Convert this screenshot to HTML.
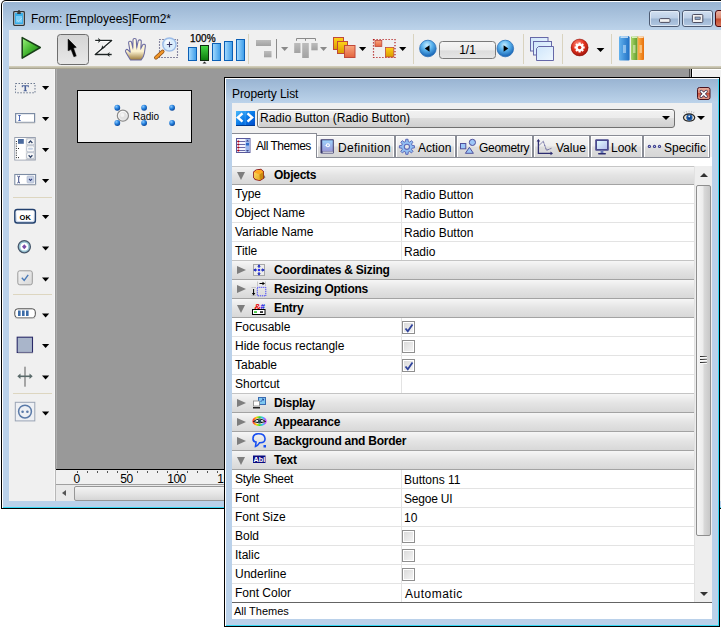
<!DOCTYPE html><html><head><meta charset="utf-8"><style>

*{box-sizing:border-box}
body{margin:0;width:721px;height:627px;background:#fff;position:relative;overflow:hidden;font-family:"Liberation Sans",sans-serif;font-size:12px;color:#000}
.abs{position:absolute}
.t{position:absolute;white-space:pre;line-height:1}
.arr{position:absolute;width:0;height:0;border-left:4px solid transparent;border-right:4px solid transparent;border-top:4px solid #000}
.row{position:absolute;left:232px;width:462px;height:19px;background:#fff;border-bottom:1px solid #e3e3e3}
.hdr{position:absolute;left:232px;width:462px;height:19px;background:linear-gradient(#f6f6f6,#e4e4e4 50%,#d8d8d8);border-bottom:1px solid #a3a3a3}
.nm{position:absolute;left:3px;top:3px;white-space:pre;line-height:13px}
.vl{position:absolute;left:172px;top:4px;white-space:pre;line-height:13px}
.ht{position:absolute;left:42px;top:3px;white-space:pre;line-height:13px;font-weight:bold;letter-spacing:-0.25px}
.tri-r{position:absolute;left:5px;top:5px;width:0;height:0;border-top:4.5px solid transparent;border-bottom:4.5px solid transparent;border-left:9px solid #7e7e7e}
.tri-d{position:absolute;left:5px;top:6px;width:0;height:0;border-left:4.7px solid transparent;border-right:4.7px solid transparent;border-top:8.7px solid #7e7e7e}
.cb{position:absolute;left:170px;top:3px;width:13px;height:13px;border:1px solid #8f8f8f;background:linear-gradient(135deg,#d8d8d8,#f6f6f6);box-shadow:inset 0 0 0 1px #fff}
.tab{position:absolute;top:135px;height:23px;border:1px solid #898c95;border-bottom:1px solid #898c95;background:linear-gradient(#f6f6f6,#ededed 48%,#dedede 52%,#d6d6d6);box-shadow:inset 1px 1px 0 #fff, inset -1px 0 0 #fff}
.sep{position:absolute;width:1px;background:#d6d0bd}

</style></head><body>
<div class="abs" style="left:1px;top:0;width:740px;height:509px;background:#000;border-radius:5px 0 0 0"></div>
<div class="abs" style="left:2px;top:1px;width:740px;height:507px;background:#fff;border-radius:4px 0 0 0"></div>
<div class="abs" style="left:3px;top:2px;width:740px;height:506px;background:#bad1ea;border-radius:3px 0 0 0"></div>
<div class="abs" style="left:3px;top:2px;width:740px;height:28px;background:linear-gradient(#99b4d2,#bcd3ea);border-radius:3px 0 0 0"></div>
<div class="abs" style="left:3px;top:507px;width:740px;height:1px;background:#34d8f4"></div>
<svg class="abs" style="left:0;top:0" width="721" height="30" viewBox="0 0 721 30">
<defs>
<linearGradient id="wBtn" x1="0" y1="0" x2="0" y2="1"><stop offset="0" stop-color="#d3e1f1"/><stop offset="0.48" stop-color="#bccfe6"/><stop offset="0.52" stop-color="#9db6d3"/><stop offset="1" stop-color="#b2c8e2"/></linearGradient>
<linearGradient id="wClose" x1="0" y1="0" x2="0" y2="1"><stop offset="0" stop-color="#ebb0a2"/><stop offset="0.48" stop-color="#d98870"/><stop offset="0.52" stop-color="#c24a2c"/><stop offset="1" stop-color="#d8775e"/></linearGradient>
</defs>
<rect x="13.7" y="11.6" width="10.6" height="13.7" rx="0.8" fill="#cde6f8" stroke="#333" stroke-width="1.3"/>
<rect x="15" y="13" width="8" height="11" fill="#3aaee8"/>
<rect x="16" y="16" width="6" height="6.5" fill="#7ccdf6"/>
<path d="M17 20 L18.7 21.5 L21.5 18.3" fill="none" stroke="#d8f0ff" stroke-width="0.9" stroke-dasharray="0.8 0.6"/>
<rect x="17.2" y="12.3" width="3.6" height="1.6" fill="#333"/><rect x="18.3" y="10" width="1.4" height="3" fill="#333"/>
<rect x="649.5" y="10.5" width="30" height="16" rx="2.5" fill="url(#wBtn)" stroke="#4d5b72"/>
<rect x="650.5" y="11.5" width="28" height="14" rx="1.5" fill="none" stroke="#e6eef8" stroke-opacity="0.8"/>
<rect x="659.5" y="18.6" width="10.5" height="3.8" rx="1" fill="#f2f2f2" stroke="#3c3c50" stroke-width="0.9"/>
<rect x="682.5" y="10.5" width="30" height="16" rx="2.5" fill="url(#wBtn)" stroke="#4d5b72"/>
<rect x="683.5" y="11.5" width="28" height="14" rx="1.5" fill="none" stroke="#e6eef8" stroke-opacity="0.8"/>
<rect x="692.4" y="14.5" width="10.4" height="8" rx="1" fill="#f2f2f2" stroke="#3c3c50" stroke-width="0.9"/>
<rect x="695" y="17" width="5.2" height="2.6" fill="#8fa8c8" stroke="#3c3c50" stroke-width="0.6"/>
<rect x="715.5" y="10.5" width="40" height="16" rx="2.5" fill="url(#wClose)" stroke="#4a0a10"/>
</svg>
<div class="t" style="left:31px;top:13px;font-size:12px">Form: [Employees]Form2*</div>
<div class="abs" style="left:9px;top:30px;width:740px;height:471px;background:#f0f0f0"></div>
<div class="abs" style="left:9px;top:66px;width:740px;height:3px;background:linear-gradient(#d6d2bf,#c2beaa,#9a9684)"></div>
<svg class="abs" style="left:0;top:0" width="721" height="70" viewBox="0 0 721 70">
<defs>
<linearGradient id="gPlay" x1="0" y1="0" x2="1" y2="1"><stop offset="0" stop-color="#9cf57c"/><stop offset="0.5" stop-color="#43b52f"/><stop offset="1" stop-color="#157015"/></linearGradient>
<linearGradient id="gSel" x1="0" y1="0" x2="0" y2="1"><stop offset="0" stop-color="#d5d5d5"/><stop offset="0.5" stop-color="#dedede"/><stop offset="1" stop-color="#e8e8e8"/></linearGradient>
<linearGradient id="gBar" x1="0" y1="0" x2="1" y2="0"><stop offset="0" stop-color="#a7dcff"/><stop offset="1" stop-color="#3a9be8"/></linearGradient>
<linearGradient id="gGreen" x1="0" y1="0" x2="0" y2="1"><stop offset="0" stop-color="#45d845"/><stop offset="1" stop-color="#0b7a0b"/></linearGradient>
<linearGradient id="gGray" x1="0" y1="0" x2="0" y2="1"><stop offset="0" stop-color="#bdbdbd"/><stop offset="1" stop-color="#a2a2a2"/></linearGradient>
<linearGradient id="gYel" x1="0" y1="0" x2="0" y2="1"><stop offset="0" stop-color="#ffd21a"/><stop offset="1" stop-color="#d99a00"/></linearGradient>
<linearGradient id="gSal" x1="0" y1="0" x2="0" y2="1"><stop offset="0" stop-color="#f9a77f"/><stop offset="1" stop-color="#e3633d"/></linearGradient>
<radialGradient id="gBlueC" cx="0.45" cy="0.3" r="0.7"><stop offset="0" stop-color="#c6ecff"/><stop offset="0.45" stop-color="#5ab3ee"/><stop offset="1" stop-color="#145fb0"/></radialGradient>
<linearGradient id="gBox" x1="0" y1="0" x2="0" y2="1"><stop offset="0" stop-color="#f6f6f6"/><stop offset="0.5" stop-color="#ececec"/><stop offset="0.55" stop-color="#dcdcdc"/><stop offset="1" stop-color="#e6e6e6"/></linearGradient>
<linearGradient id="gPage" x1="0" y1="0" x2="1" y2="1"><stop offset="0" stop-color="#cfe6fb"/><stop offset="1" stop-color="#eef7ff"/></linearGradient>
<radialGradient id="gRed" cx="0.4" cy="0.3" r="0.75"><stop offset="0" stop-color="#ff8c7a"/><stop offset="0.5" stop-color="#e2321e"/><stop offset="1" stop-color="#9b120a"/></radialGradient>
<linearGradient id="gBook1" x1="0" y1="0" x2="1" y2="0"><stop offset="0" stop-color="#63b2ee"/><stop offset="1" stop-color="#1f6fc4"/></linearGradient>
<linearGradient id="gBook2" x1="0" y1="0" x2="1" y2="0"><stop offset="0" stop-color="#a9d66a"/><stop offset="1" stop-color="#5f9a2a"/></linearGradient>
<linearGradient id="gBook3" x1="0" y1="0" x2="1" y2="0"><stop offset="0" stop-color="#ffb14a"/><stop offset="1" stop-color="#e7700c"/></linearGradient>
<linearGradient id="gHand" x1="0" y1="0" x2="0" y2="1"><stop offset="0" stop-color="#fffbe8"/><stop offset="0.6" stop-color="#fbf1cf"/><stop offset="1" stop-color="#9c7a3a"/></linearGradient>
</defs>
<path d="M22.2 37.6 L40.3 47.5 L22.2 58.2 Z" fill="url(#gPlay)" stroke="#183f18" stroke-width="1.5" stroke-linejoin="round"/>
<rect x="57.5" y="34.5" width="31" height="30" rx="3" fill="url(#gSel)" stroke="#6e6e6e"/>
<path d="M69 40 L69 51.6 L71.9 50.1 L74.8 57.6 L77 56.6 L74.3 48.8 L77.1 48 Z" fill="#888" opacity="0.45"/>
<path d="M68.1 39.1 L68.1 50.8 L71 49.3 L73.9 56.8 L76.1 55.8 L73.4 48 L76.2 47.2 Z" fill="#000" stroke="#000" stroke-width="0.5" stroke-linejoin="round"/>
<g stroke="#fff" stroke-width="3.2" fill="none" opacity="0.85" stroke-linejoin="round"><path d="M95.2 40.4 H111.7 L95.2 54.5 H111.7"/></g>
<g stroke="#1e2424" stroke-width="1.3" fill="none" stroke-linejoin="round"><path d="M95.2 40.4 H111.7 L95.2 54.5 H111.7"/></g>
<g fill="#1e2424"><path d="M101 40.4 L98 37.8 L98.9 40.4 L98 43 Z"/><path d="M106.8 54.5 L109.8 51.9 L108.9 54.5 L109.8 57.1 Z"/><path d="M101.2 49.6 L102.2 45.2 L103.4 47.4 L105.8 47.2 Z"/></g>
<path d="M130.5 60 C129 57.5 127 54.5 125.6 51.8 C125 50.3 126.5 48.8 127.8 49.8 L130.2 52.2 L128.6 43 C128.3 41 131.3 40.5 131.6 42.5 L132.8 48 L133 40 C133 38 136.3 38 136.3 40 L136.7 47.8 L138.2 41 C138.6 39.2 141.6 39.6 141.3 41.6 L140.8 48.5 L142.5 45.2 C143.2 43.5 145.8 44.2 145.4 46 L144.3 53.5 C143.8 56.5 142.5 58.5 141 60 Z" fill="url(#gHand)" stroke="#6c6ca2" stroke-width="1.1" stroke-linejoin="round"/>
<path d="M132.6 47.5 L132.9 49.5 M136.6 47.3 V49.5 M140.8 48.2 L140.5 50" stroke="#9a9ab8" stroke-width="0.7"/>
<rect x="159.5" y="39.5" width="18" height="18" fill="none" stroke="#1c1c50" stroke-width="1.1" stroke-dasharray="1 2"/>
<line x1="156" y1="57.6" x2="162.6" y2="51.6" stroke="#8a4a10" stroke-width="3.8" stroke-linecap="round"/>
<line x1="156" y1="57.6" x2="162.6" y2="51.6" stroke="#f0962a" stroke-width="2.4" stroke-linecap="round"/>
<circle cx="169.4" cy="44.5" r="6.6" fill="#d8ecfc" stroke="#9cbce8" stroke-width="1.5"/>
<circle cx="168" cy="42.6" r="2.8" fill="#fff" opacity="0.8"/>
<path d="M169.5 41.8 V47.3 M166.8 44.5 H172.3" stroke="#3a3a6a" stroke-width="1.1"/>
<text x="190" y="42" font-family="Liberation Sans" font-size="10" fill="#000" stroke="#000" stroke-width="0.25">100%</text>
<rect x="188.5" y="47.5" width="8.0" height="13.0" fill="url(#gBar)" stroke="#0b5fb5" stroke-width="1"/>
<rect x="200.5" y="45.5" width="8.0" height="15.0" fill="url(#gGreen)" stroke="#0e2a0e" stroke-width="1"/>
<rect x="212.5" y="43.5" width="8.0" height="17.0" fill="url(#gBar)" stroke="#0b5fb5" stroke-width="1"/>
<rect x="224.5" y="41.5" width="8.0" height="19.0" fill="url(#gBar)" stroke="#0b5fb5" stroke-width="1"/>
<rect x="236.5" y="39.5" width="8.0" height="21.0" fill="url(#gBar)" stroke="#0b5fb5" stroke-width="1"/>
<path d="M204.5 61.5 L202.5 63.5 H206.5 Z" fill="#222"/>
<rect x="248" y="34" width="1" height="30" fill="#d9d3bf"/>
<rect x="413" y="34" width="1" height="30" fill="#d9d3bf"/>
<rect x="523" y="34" width="1" height="30" fill="#d9d3bf"/>
<rect x="562" y="34" width="1" height="30" fill="#d9d3bf"/>
<rect x="611" y="34" width="1" height="30" fill="#d9d3bf"/>
<rect x="256" y="40" width="15" height="6" fill="url(#gGray)"/>
<rect x="264" y="51" width="7.5" height="6.3" fill="url(#gGray)"/>
<rect x="276" y="39" width="1" height="19.5" fill="#8c8c8c"/>
<path d="M281 47 H288.3 L284.65 51 Z" fill="#8a8a8a"/>
<path d="M296.5 40.8 V38.5 H315.5 V40.8 M305.5 38.5 V40.8" fill="none" stroke="#8a8a8a" stroke-width="1"/>
<rect x="294.2" y="43" width="6.3" height="10" fill="url(#gGray)"/>
<rect x="302.2" y="43" width="6.6" height="15" fill="url(#gGray)"/>
<rect x="311.3" y="43" width="6.4" height="7.3" fill="url(#gGray)"/>
<path d="M320 47 H327.1 L323.55 51 Z" fill="#8a8a8a"/>
<rect x="333.5" y="37.5" width="10" height="12" fill="url(#gYel)" stroke="#c0483a"/>
<rect x="337.5" y="41.5" width="10" height="12" fill="url(#gYel)" stroke="#c0483a"/>
<rect x="344.5" y="45.5" width="10.5" height="12" fill="url(#gSal)" stroke="#c0483a"/>
<path d="M359 47 H366.2 L362.6 51 Z" fill="#000"/>
<rect x="373.5" y="39.5" width="21.5" height="18" fill="none" stroke="#b01818" stroke-width="1.2" stroke-dasharray="1.2 1.8"/>
<rect x="375" y="40.5" width="6.8" height="6" fill="url(#gSal)" stroke="#c0483a" stroke-width="0.8"/>
<rect x="385.5" y="47.5" width="8.3" height="9.5" fill="url(#gYel)" stroke="#c0483a" stroke-width="0.8"/>
<path d="M399.1 47 H406.3 L402.7 51 Z" fill="#000"/>
<circle cx="427.9" cy="48.5" r="8.3" fill="url(#gBlueC)" stroke="#2a6fb8" stroke-width="0.8"/>
<path d="M424.8 48.5 L429.5 45.2 V51.8 Z" fill="#000"/>
<rect x="439.5" y="41.5" width="56" height="17" rx="3" fill="url(#gBox)" stroke="#7a7a7a"/>
<text x="467.5" y="54" font-family="Liberation Sans" font-size="12" text-anchor="middle" fill="#000">1/1</text>
<circle cx="505.3" cy="48.5" r="8.3" fill="url(#gBlueC)" stroke="#2a6fb8" stroke-width="0.8"/>
<path d="M508.3 48.5 L503.6 45.2 V51.8 Z" fill="#000"/>
<rect x="530.5" y="37.5" width="17.5" height="13.5" fill="url(#gPage)" stroke="#6668a8"/>
<rect x="533.5" y="41.5" width="18" height="13.5" fill="url(#gPage)" stroke="#6668a8"/>
<path d="M538.5 46.5 H553.5 V60.5 H536.5 V48.5 Z" fill="url(#gPage)" stroke="#6668a8"/>
<circle cx="579.6" cy="47.5" r="8.6" fill="url(#gRed)"/>
<path d="M583.06 46.20 L584.70 46.47 L584.70 48.53 L583.06 48.80 L582.97 49.03 L583.93 50.37 L582.47 51.83 L581.13 50.87 L580.90 50.96 L580.63 52.60 L578.57 52.60 L578.30 50.96 L578.07 50.87 L576.73 51.83 L575.27 50.37 L576.23 49.03 L576.14 48.80 L574.50 48.53 L574.50 46.47 L576.14 46.20 L576.23 45.97 L575.27 44.63 L576.73 43.17 L578.07 44.13 L578.30 44.04 L578.57 42.40 L580.63 42.40 L580.90 44.04 L581.13 44.13 L582.47 43.17 L583.93 44.63 L582.97 45.97 Z" fill="#fff"/>
<circle cx="579.6" cy="47.5" r="1.8" fill="#d8301c"/>
<circle cx="579.6" cy="47.5" r="8.4" fill="none" stroke="#8a0a06" stroke-width="0.8" opacity="0.7"/>
<path d="M596.6 48 H604.4 L600.5 52 Z" fill="#000"/>
<path d="M619 37.5 Q619 36 620.5 36 H628 Q629.6 36 629.6 37.5 V59.5 Q629.6 60.5 628.5 60.5 H620 Q619 60.5 619 59.5 Z" fill="url(#gBook1)"/>
<path d="M631 37 Q631 36.5 631.6 36.5 H637.6 V60 H631.8 Q631 60 631 59 Z" fill="url(#gBook2)"/>
<path d="M637.6 36.5 H643.4 Q644 36.5 644 37 V59 Q644 60 643.2 60 H637.6 Z" fill="url(#gBook3)"/>
<rect x="620.5" y="36.3" width="7.5" height="1.5" fill="#e8f4ff" opacity="0.9"/>
<rect x="632" y="36.6" width="5" height="1.3" fill="#eaffd0" opacity="0.9"/>
<rect x="638.5" y="36.6" width="5" height="1.3" fill="#fff0d8" opacity="0.9"/>
<rect x="623" y="45" width="3" height="8" fill="#bfe0fb" opacity="0.6"/>
<rect x="633" y="45" width="2.5" height="8" fill="#dff0c0" opacity="0.6"/>
<rect x="639.5" y="45" width="2.5" height="8" fill="#ffe0b0" opacity="0.6"/>
</svg>
<div class="abs" style="left:54px;top:69px;width:1px;height:432px;background:#f7f7f7"></div>
<div class="abs" style="left:55px;top:69px;width:634px;height:400px;background:#999"></div>
<div class="abs" style="left:56px;top:69px;width:1px;height:400px;background:#adadad"></div>
<div class="abs" style="left:689px;top:69px;width:1px;height:432px;background:#4d4d4d"></div>
<div class="abs" style="left:690px;top:69px;width:1px;height:432px;background:#a0a0a0"></div>
<div class="abs" style="left:691px;top:69px;width:1px;height:432px;background:#000"></div>
<div class="abs" style="left:692px;top:69px;width:40px;height:432px;background:#f0f0f0;border-left:1px solid #fff;border-top:1px solid #fff"></div>
<div class="abs" style="left:56px;top:469px;width:633px;height:1px;background:#000"></div>
<div class="abs" style="left:56px;top:470px;width:633px;height:15px;background:#f0f0f0;border-bottom:1px solid #a0a0a0"></div>
<div class="abs" style="left:77px;top:471px;width:1px;height:2px;background:#555"></div>
<div class="abs" style="left:87px;top:471px;width:1px;height:2px;background:#555"></div>
<div class="abs" style="left:97px;top:471px;width:1px;height:2px;background:#555"></div>
<div class="abs" style="left:107px;top:471px;width:1px;height:2px;background:#555"></div>
<div class="abs" style="left:117px;top:471px;width:1px;height:2px;background:#555"></div>
<div class="abs" style="left:127px;top:471px;width:1px;height:2px;background:#555"></div>
<div class="abs" style="left:137px;top:471px;width:1px;height:2px;background:#555"></div>
<div class="abs" style="left:147px;top:471px;width:1px;height:2px;background:#555"></div>
<div class="abs" style="left:157px;top:471px;width:1px;height:2px;background:#555"></div>
<div class="abs" style="left:167px;top:471px;width:1px;height:2px;background:#555"></div>
<div class="abs" style="left:177px;top:471px;width:1px;height:2px;background:#555"></div>
<div class="abs" style="left:187px;top:471px;width:1px;height:2px;background:#555"></div>
<div class="abs" style="left:197px;top:471px;width:1px;height:2px;background:#555"></div>
<div class="abs" style="left:207px;top:471px;width:1px;height:2px;background:#555"></div>
<div class="abs" style="left:217px;top:471px;width:1px;height:2px;background:#555"></div>
<div class="abs" style="left:227px;top:471px;width:1px;height:2px;background:#555"></div>
<div class="t" style="left:46.5px;width:60px;text-align:center;top:473px;font-size:12px;letter-spacing:-0.5px">0</div>
<div class="t" style="left:96.5px;width:60px;text-align:center;top:473px;font-size:12px;letter-spacing:-0.5px">50</div>
<div class="t" style="left:146.5px;width:60px;text-align:center;top:473px;font-size:12px;letter-spacing:-0.5px">100</div>
<div class="t" style="left:196.5px;width:60px;text-align:center;top:473px;font-size:12px;letter-spacing:-0.5px">150</div>
<div class="abs" style="left:56px;top:485px;width:633px;height:16px;background:#e9e9e9"></div>
<div class="abs" style="left:55px;top:469px;width:1px;height:32px;background:#b8b8b8"></div>
<div class="abs" style="left:62px;top:490px;width:0;height:0;border-top:3.5px solid transparent;border-bottom:3.5px solid transparent;border-right:4px solid #555"></div>
<div class="abs" style="left:74px;top:486px;width:600px;height:15px;border:1px solid #979797;border-radius:2px;background:linear-gradient(#f3f3f3,#e6e6e6 50%,#d6d6d6)"></div>
<div class="abs" style="left:77px;top:90px;width:115px;height:53px;background:#000"></div>
<div class="abs" style="left:78px;top:91px;width:113px;height:51px;background:#f0f0f0"></div>
<svg class="abs" style="left:0;top:0" width="200" height="500" viewBox="0 0 200 500">
<defs>
<linearGradient id="okG" x1="0" y1="0" x2="0" y2="1"><stop offset="0" stop-color="#ffffff"/><stop offset="1" stop-color="#c8d4e8"/></linearGradient>
<linearGradient id="cbG" x1="0" y1="0" x2="1" y2="1"><stop offset="0" stop-color="#f4f4f4"/><stop offset="1" stop-color="#d8d8d8"/></linearGradient>
<radialGradient id="rdG" cx="0.4" cy="0.35" r="0.7"><stop offset="0" stop-color="#ffffff"/><stop offset="0.6" stop-color="#e0e0e0"/><stop offset="1" stop-color="#a8a8a8"/></radialGradient>
<radialGradient id="dotG" cx="0.35" cy="0.3" r="0.7"><stop offset="0" stop-color="#8cc8ff"/><stop offset="0.5" stop-color="#2a86e0"/><stop offset="1" stop-color="#0a4aa0"/></radialGradient>
</defs>
<path d="M42 86 H49.2 L45.6 90 Z" fill="#000"/>
<path d="M42 117 H49.2 L45.6 121 Z" fill="#000"/>
<path d="M42 148 H49.2 L45.6 152 Z" fill="#000"/>
<path d="M42 179 H49.2 L45.6 183 Z" fill="#000"/>
<path d="M42 215 H49.2 L45.6 219 Z" fill="#000"/>
<path d="M42 246.5 H49.2 L45.6 250.5 Z" fill="#000"/>
<path d="M42 277.5 H49.2 L45.6 281.5 Z" fill="#000"/>
<path d="M42 313.5 H49.2 L45.6 317.5 Z" fill="#000"/>
<path d="M42 344 H49.2 L45.6 348 Z" fill="#000"/>
<path d="M42 375.5 H49.2 L45.6 379.5 Z" fill="#000"/>
<path d="M42 411.5 H49.2 L45.6 415.5 Z" fill="#000"/>
<rect x="13" y="197" width="39" height="1" fill="#ddd6c0"/>
<rect x="13" y="294" width="39" height="1" fill="#ddd6c0"/>
<rect x="13" y="393" width="39" height="1" fill="#ddd6c0"/>
<rect x="15.5" y="83.5" width="19.5" height="9.3" fill="none" stroke="#6a7890" stroke-width="1" stroke-dasharray="1.5 1.5"/>
<path d="M21.8 85.2 H28.8 V87.2 H28 L27.6 86.3 H26.1 V90.2 L27 90.6 V91.3 H23.6 V90.6 L24.5 90.2 V86.3 H23 L22.6 87.2 H21.8 Z" fill="#4a6098"/>
<rect x="15.6" y="113.6" width="19" height="8.8" fill="#fff" stroke="#7c8ca4" stroke-width="1.2"/>
<rect x="16" y="122.5" width="19" height="1" fill="#c8c8c8"/>
<path d="M18.3 115.5 H20.7 M19.5 115.5 V120.5 M18.3 120.5 H20.7" stroke="#3a5ab0" stroke-width="0.9"/>
<rect x="14.8" y="137.5" width="20.5" height="22.5" fill="#dcdcdc" stroke="#98a0b0"/>
<rect x="15.3" y="138" width="10.5" height="21.5" fill="#fff"/>
<rect x="18" y="139" width="5.8" height="4.8" fill="#4a6a9e"/>
<rect x="15.9" y="141" width="1" height="1" fill="#222"/>
<rect x="15.9" y="143.3" width="1" height="1" fill="#222"/>
<rect x="15.9" y="145.6" width="1" height="1" fill="#222"/>
<rect x="15.9" y="147.9" width="1" height="1" fill="#222"/>
<rect x="15.9" y="150.2" width="1" height="1" fill="#222"/>
<rect x="15.9" y="152.5" width="1" height="1" fill="#222"/>
<rect x="15.9" y="154.8" width="1" height="1" fill="#222"/>
<rect x="15.9" y="157.1" width="1" height="1" fill="#222"/>
<rect x="18" y="148" width="1" height="1" fill="#222"/><rect x="18" y="157.1" width="1" height="1" fill="#222"/>
<rect x="26.6" y="138.8" width="7.8" height="6" rx="1.5" fill="#fafafa" stroke="#b4bccb" stroke-width="0.8"/>
<rect x="26.6" y="145.8" width="7.8" height="6" rx="1.5" fill="#fafafa" stroke="#b4bccb" stroke-width="0.8"/>
<rect x="26.6" y="152.6" width="7.8" height="6" rx="1.5" fill="#fafafa" stroke="#b4bccb" stroke-width="0.8"/>
<path d="M28.6 143 L30.5 141 L32.4 143" fill="none" stroke="#34466a" stroke-width="1.3"/>
<path d="M28.6 155.2 L30.5 157.2 L32.4 155.2" fill="none" stroke="#34466a" stroke-width="1.3"/>
<rect x="28" y="147.8" width="5" height="2" rx="1" fill="#c4d0e2"/>
<rect x="14.8" y="174.5" width="20.8" height="10" fill="#fff" stroke="#7c8ca4" stroke-width="1.1"/>
<rect x="15" y="184.6" width="21" height="1" fill="#c8c8c8"/>
<path d="M17.3 176 Q18.6 176.3 18.7 177.5 V181.5 Q18.6 182.8 17.3 183 M20 176 Q18.7 176.3 18.7 177.5 M20 183 Q18.7 182.8 18.7 181.5" fill="none" stroke="#2a3a7a" stroke-width="0.9"/>
<rect x="27" y="176" width="7" height="7" rx="1" fill="#c8d2e6" stroke="#a8b4c8" stroke-width="0.6"/>
<path d="M29 178.8 L30.5 180.5 L32 178.8" fill="none" stroke="#2a3a7a" stroke-width="1.1"/>
<rect x="14.8" y="209.5" width="20.6" height="13.5" rx="2.5" fill="url(#okG)" stroke="#22406e" stroke-width="1.4"/>
<rect x="17" y="211" width="16.5" height="10" rx="1" fill="#fff"/>
<text x="25.2" y="219.6" font-family="Liberation Sans" font-size="7.5" font-weight="bold" text-anchor="middle" fill="#000">OK</text>
<circle cx="24.3" cy="246.7" r="6.1" fill="#98c4d4" stroke="#46566a" stroke-width="1.3"/>
<circle cx="24.3" cy="246.7" r="3.9" fill="#fff"/>
<path d="M24.3 244.2 L26.6 246.7 L24.3 249.2 L22 246.7 Z" fill="#7a4aa8"/>
<rect x="17.8" y="270.8" width="14.5" height="14" rx="2" fill="url(#cbG)" stroke="#9a9a9a"/>
<path d="M21.8 277.8 L24.2 280.4 L28.2 274.8" fill="none" stroke="#4a7ab8" stroke-width="1.4"/>
<rect x="14.8" y="308.8" width="20.5" height="9" rx="3" fill="#fff" stroke="#4a4a4a" stroke-width="1"/>
<rect x="15.5" y="317.5" width="19.5" height="1" fill="#bbb"/>
<rect x="18" y="310.5" width="2.6" height="5.5" fill="#3c6ca8"/>
<rect x="22" y="310.5" width="2.6" height="5.5" fill="#3c6ca8"/>
<rect x="26" y="310.5" width="2.6" height="5.5" fill="#3c6ca8"/>
<rect x="17.2" y="337.2" width="15.3" height="15.3" fill="#a9b5ca" stroke="#2a2a68" stroke-width="1.1"/>
<rect x="18" y="352.6" width="15" height="1" fill="#ccc"/>
<path d="M25 366.7 V386.7" stroke="#5a5a5a" stroke-width="1"/>
<path d="M19 376.3 H31" stroke="#5a6a6a" stroke-width="1.6"/>
<path d="M17.3 376.3 L20.5 373.5 V379.1 Z M32.7 376.3 L29.5 373.5 V379.1 Z" fill="#5a6a6a"/>
<rect x="15.3" y="402.3" width="19.5" height="18.6" fill="#eef0f4" stroke="#9aa4b4" stroke-width="1"/>
<circle cx="25" cy="411.6" r="6.4" fill="none" stroke="#5a7aa8" stroke-width="1.5"/>
<circle cx="22.6" cy="411.8" r="1.3" fill="#5a7aa8"/><circle cx="27.4" cy="411.8" r="1.3" fill="#5a7aa8"/>
<rect x="191" y="91" width="1" height="52" fill="#000"/>
<circle cx="122.9" cy="115.7" r="5.5" fill="url(#rdG)" stroke="#8c8c8c" stroke-width="1.3"/>
<circle cx="122.9" cy="115.7" r="4.3" fill="none" stroke="#fff" stroke-width="0.9" opacity="0.9"/><circle cx="122.9" cy="115.7" r="3.4" fill="#e2e2e2"/><circle cx="122.3" cy="115" r="2" fill="#f4f4f4"/>
<text x="133" y="120" font-family="Liberation Sans" font-size="10" fill="#000">Radio</text>
<circle cx="117.3" cy="107.75" r="2.9" fill="url(#dotG)"/>
<circle cx="117.3" cy="123" r="2.9" fill="url(#dotG)"/>
<circle cx="144.1" cy="107.75" r="2.9" fill="url(#dotG)"/>
<circle cx="144.1" cy="123" r="2.9" fill="url(#dotG)"/>
<circle cx="172.1" cy="107.75" r="2.9" fill="url(#dotG)"/>
<circle cx="172.1" cy="123" r="2.9" fill="url(#dotG)"/>
</svg>
<div class="abs" style="left:224px;top:77px;width:496px;height:550px;background:#000"></div>
<div class="abs" style="left:225px;top:78px;width:494px;height:548px;background:#fff"></div>
<div class="abs" style="left:226px;top:79px;width:493px;height:547px;background:#bad1ea"></div>
<div class="abs" style="left:226px;top:79px;width:492px;height:24px;background:linear-gradient(#99b4d2,#bcd3ea)"></div>
<div class="abs" style="left:718px;top:79px;width:1px;height:547px;background:#34d8f4"></div>
<div class="abs" style="left:226px;top:625px;width:493px;height:1px;background:#34d8f4"></div>
<div class="t" style="left:232px;top:88px;font-size:12px;letter-spacing:-0.08px">Property List</div>
<div class="abs" style="left:232px;top:103px;width:480px;height:516px;background:#f0f0f0"></div>
<div class="abs" style="left:257px;top:109px;width:418px;height:19px;border:1px solid #707070;border-radius:3px;background:linear-gradient(#f2f2f2,#ebebeb 50%,#dddddd 50%,#cfcfcf);box-shadow:inset 0 1px 0 #fff, inset 1px 0 0 #f8f8f8"></div>
<div class="t" style="left:260px;top:112px">Radio Button (Radio Button)</div>
<div class="arr" style="left:662px;top:116px"></div>
<div class="arr" style="left:697px;top:116px"></div>
<div class="abs" style="left:232px;top:157px;width:480px;height:10px;background:#fff"></div>
<div class="tab" style="left:316px;width:79px"></div>
<div class="t" style="left:338px;top:142px;letter-spacing:0.3px">Definition</div>
<div class="tab" style="left:395px;width:61px"></div>
<div class="t" style="left:418px;top:142px;letter-spacing:0">Action</div>
<div class="tab" style="left:456px;width:77px"></div>
<div class="t" style="left:479px;top:142px;letter-spacing:-0.3px">Geometry</div>
<div class="tab" style="left:533px;width:57px"></div>
<div class="t" style="left:556px;top:142px;letter-spacing:0">Value</div>
<div class="tab" style="left:590px;width:53px"></div>
<div class="t" style="left:611px;top:142px;letter-spacing:0">Look</div>
<div class="tab" style="left:643px;width:67px"></div>
<div class="t" style="left:664px;top:142px;letter-spacing:0">Specific</div>
<div class="abs" style="left:232px;top:133px;width:85px;height:25px;background:#fff;border-top:1px solid #898c95;border-right:1px solid #898c95"></div>
<div class="t" style="left:256px;top:140px;letter-spacing:-0.5px">All Themes</div>
<div class="hdr" style="top:166px"><div class="tri-d"></div><div class="ht">Objects</div></div>
<div class="row" style="top:185px;"><div class="nm" style="letter-spacing:0">Type</div><div class="abs" style="left:169px;top:0;width:1px;height:18px;background:#e3e3e3"></div><div class="vl" style="">Radio Button</div></div>
<div class="row" style="top:204px;"><div class="nm" style="letter-spacing:0">Object Name</div><div class="abs" style="left:169px;top:0;width:1px;height:18px;background:#e3e3e3"></div><div class="vl" style="">Radio Button</div></div>
<div class="row" style="top:223px;"><div class="nm" style="letter-spacing:0">Variable Name</div><div class="abs" style="left:169px;top:0;width:1px;height:18px;background:#e3e3e3"></div><div class="vl" style="">Radio Button</div></div>
<div class="row" style="top:242px;border-bottom-color:#c4c4c4"><div class="nm" style="letter-spacing:0">Title</div><div class="abs" style="left:169px;top:0;width:1px;height:18px;background:#e3e3e3"></div><div class="vl" style="">Radio</div></div>
<div class="hdr" style="top:261px"><div class="tri-r"></div><div class="ht">Coordinates &amp; Sizing</div></div>
<div class="hdr" style="top:280px"><div class="tri-r"></div><div class="ht">Resizing Options</div></div>
<div class="hdr" style="top:299px"><div class="tri-d"></div><div class="ht">Entry</div></div>
<div class="row" style="top:318px;"><div class="nm" style="letter-spacing:0">Focusable</div><div class="abs" style="left:169px;top:0;width:1px;height:18px;background:#e3e3e3"></div><div class="cb"></div><svg class="abs" style="left:172px;top:5px" width="10" height="10" viewBox="0 0 10 10"><path d="M1.5 5.5 L3.8 8.3 L8.5 1.5" fill="none" stroke="#30449c" stroke-width="1.8"/></svg></div>
<div class="row" style="top:337px;"><div class="nm" style="letter-spacing:0">Hide focus rectangle</div><div class="abs" style="left:169px;top:0;width:1px;height:18px;background:#e3e3e3"></div><div class="cb"></div></div>
<div class="row" style="top:356px;"><div class="nm" style="letter-spacing:0">Tabable</div><div class="abs" style="left:169px;top:0;width:1px;height:18px;background:#e3e3e3"></div><div class="cb"></div><svg class="abs" style="left:172px;top:5px" width="10" height="10" viewBox="0 0 10 10"><path d="M1.5 5.5 L3.8 8.3 L8.5 1.5" fill="none" stroke="#30449c" stroke-width="1.8"/></svg></div>
<div class="row" style="top:375px;border-bottom-color:#c4c4c4"><div class="nm" style="letter-spacing:0">Shortcut</div><div class="abs" style="left:169px;top:0;width:1px;height:18px;background:#e3e3e3"></div><div class="vl" style=""></div></div>
<div class="hdr" style="top:394px"><div class="tri-r"></div><div class="ht">Display</div></div>
<div class="hdr" style="top:413px"><div class="tri-r"></div><div class="ht">Appearance</div></div>
<div class="hdr" style="top:432px"><div class="tri-r"></div><div class="ht">Background and Border</div></div>
<div class="hdr" style="top:451px"><div class="tri-d"></div><div class="ht">Text</div></div>
<div class="row" style="top:470px;"><div class="nm" style="letter-spacing:-0.3px">Style Sheet</div><div class="abs" style="left:169px;top:0;width:1px;height:18px;background:#e3e3e3"></div><div class="vl" style="">Buttons 11</div></div>
<div class="row" style="top:489px;"><div class="nm" style="letter-spacing:0">Font</div><div class="abs" style="left:169px;top:0;width:1px;height:18px;background:#e3e3e3"></div><div class="vl" style="letter-spacing:-0.2px">Segoe UI</div></div>
<div class="row" style="top:508px;"><div class="nm" style="letter-spacing:0">Font Size</div><div class="abs" style="left:169px;top:0;width:1px;height:18px;background:#e3e3e3"></div><div class="vl" style="">10</div></div>
<div class="row" style="top:527px;"><div class="nm" style="letter-spacing:0">Bold</div><div class="abs" style="left:169px;top:0;width:1px;height:18px;background:#e3e3e3"></div><div class="cb"></div></div>
<div class="row" style="top:546px;"><div class="nm" style="letter-spacing:0">Italic</div><div class="abs" style="left:169px;top:0;width:1px;height:18px;background:#e3e3e3"></div><div class="cb"></div></div>
<div class="row" style="top:565px;"><div class="nm" style="letter-spacing:0">Underline</div><div class="abs" style="left:169px;top:0;width:1px;height:18px;background:#e3e3e3"></div><div class="cb"></div></div>
<div class="row" style="top:584px;"><div class="nm" style="letter-spacing:0">Font Color</div><div class="abs" style="left:169px;top:0;width:1px;height:18px;background:#e3e3e3"></div><div class="vl" style="left:173px;letter-spacing:0.5px">Automatic</div></div>
<div class="abs" style="left:232px;top:166px;width:462px;height:1px;background:#c6c6c6"></div>
<div class="abs" style="left:694px;top:166px;width:18px;height:436px;background:#eeeeee;border-left:1px solid #e2e2e2"></div>
<div class="abs" style="left:700px;top:173px;width:0;height:0;border-left:4px solid transparent;border-right:4px solid transparent;border-bottom:4px solid #333"></div>
<div class="abs" style="left:700px;top:592px;width:0;height:0;border-left:4px solid transparent;border-right:4px solid transparent;border-top:4px solid #333"></div>
<div class="abs" style="left:696px;top:185px;width:15px;height:351px;border:1px solid #8e8e8e;border-radius:2px;background:linear-gradient(90deg,#f6f6f6,#ececec 45%,#d8d8d8 55%,#c8c8c8)"></div>
<div class="abs" style="left:700px;top:356px;width:7px;height:1px;background:linear-gradient(90deg,#222,#555 60%,#888)"></div>
<div class="abs" style="left:700px;top:357px;width:7px;height:1px;background:#fafafa"></div>
<div class="abs" style="left:700px;top:359px;width:7px;height:1px;background:linear-gradient(90deg,#222,#555 60%,#888)"></div>
<div class="abs" style="left:700px;top:360px;width:7px;height:1px;background:#fafafa"></div>
<div class="abs" style="left:700px;top:362px;width:7px;height:1px;background:linear-gradient(90deg,#222,#555 60%,#888)"></div>
<div class="abs" style="left:700px;top:363px;width:7px;height:1px;background:#fafafa"></div>
<div class="abs" style="left:232px;top:602px;width:480px;height:1px;background:#646464"></div>
<div class="abs" style="left:232px;top:603px;width:480px;height:16px;background:#fff"></div>
<div class="t" style="left:234px;top:606px;font-size:11px">All Themes</div>
<svg class="abs" style="left:0;top:0" width="721" height="627" viewBox="0 0 721 627">
<defs>
<linearGradient id="pNav" x1="0" y1="0" x2="1" y2="1"><stop offset="0" stop-color="#4ab8fa"/><stop offset="0.5" stop-color="#0a7ae8"/><stop offset="1" stop-color="#0048c8"/></linearGradient>
<linearGradient id="pBook" x1="0" y1="0" x2="0" y2="1"><stop offset="0" stop-color="#9dd2fd"/><stop offset="1" stop-color="#9a98d8"/></linearGradient>
<linearGradient id="pLight" x1="0" y1="0" x2="0" y2="1"><stop offset="0" stop-color="#a8d8ff"/><stop offset="1" stop-color="#94a8e6"/></linearGradient>
<linearGradient id="pScreen" x1="0" y1="0" x2="1" y2="1"><stop offset="0" stop-color="#e0fbff"/><stop offset="1" stop-color="#b8c0ec"/></linearGradient>
<linearGradient id="pCube" x1="0" y1="0" x2="1" y2="1"><stop offset="0" stop-color="#ffe070"/><stop offset="1" stop-color="#e2a010"/></linearGradient>
<linearGradient id="pClose" x1="0" y1="0" x2="0" y2="1"><stop offset="0" stop-color="#eab1a2"/><stop offset="0.45" stop-color="#d98471"/><stop offset="0.5" stop-color="#c8503a"/><stop offset="1" stop-color="#e6a595"/></linearGradient>
<linearGradient id="pEye" x1="0" y1="0" x2="1" y2="0"><stop offset="0" stop-color="#ff3030"/><stop offset="0.25" stop-color="#ffd000"/><stop offset="0.5" stop-color="#30e030"/><stop offset="0.75" stop-color="#30c0ff"/><stop offset="1" stop-color="#d040ff"/></linearGradient>
</defs>
<rect x="697.5" y="87.5" width="12.5" height="12" rx="2" fill="url(#pClose)" stroke="#4a1420"/>
<path d="M701.2 91.4 L706.2 96.4 M706.2 91.4 L701.2 96.4" stroke="#3a3050" stroke-width="2.9" stroke-linecap="round"/>
<path d="M701.2 91.4 L706.2 96.4 M706.2 91.4 L701.2 96.4" stroke="#fff" stroke-width="1.5" stroke-linecap="round"/>
<rect x="236" y="111" width="19" height="15" fill="url(#pNav)"/>
<rect x="244.8" y="111" width="0.6" height="15" fill="#5ac0ff" opacity="0.7"/>
<rect x="236" y="125" width="19" height="1" fill="#003a90"/>
<path d="M242.5 113.3 L237.8 117.5 L242.5 121.7" fill="none" stroke="#fff" stroke-width="2.4"/>
<path d="M247.5 113.3 L252.2 117.5 L247.5 121.7" fill="none" stroke="#fff" stroke-width="2.4"/>
<path d="M684.5 113.2 L684 111.8 M686.6 112.6 L686.3 111 M689 112.3 V110.8 M691.4 112.6 L691.7 111 M693.5 113.2 L694 111.8" stroke="#999" stroke-width="0.6"/>
<ellipse cx="689.1" cy="117.6" rx="5.6" ry="3.6" fill="#f2e6d2" stroke="#2a2a2a" stroke-width="1.3"/>
<circle cx="689.4" cy="117.6" r="3.1" fill="#1a5aa8"/>
<circle cx="689.4" cy="117.6" r="1.6" fill="#0a3a80"/>
<circle cx="689.2" cy="116.4" r="0.9" fill="#e8f4ff"/>
<rect x="236.5" y="138.5" width="13.5" height="14" fill="#f6f6ff" stroke="#5a5a9c"/>
<rect x="237" y="141" width="8.5" height="1" fill="#6a6aa8"/>
<circle cx="238.4" cy="141.5" r="1" fill="#c00010"/>
<rect x="237" y="144" width="8.5" height="1" fill="#6a6aa8"/>
<circle cx="238.4" cy="144.5" r="1" fill="#c00010"/>
<rect x="237" y="147" width="8.5" height="1" fill="#6a6aa8"/>
<circle cx="238.4" cy="147.5" r="1" fill="#c00010"/>
<rect x="237" y="150" width="8.5" height="1" fill="#6a6aa8"/>
<circle cx="238.4" cy="150.5" r="1" fill="#c00010"/>
<rect x="245.5" y="139" width="4" height="13" fill="#9bb8ee"/>
<rect x="246" y="143" width="3" height="2.5" fill="#2a6ac8"/>
<path d="M246 141.5 L247.5 139.8 L249 141.5 Z M246 150 L247.5 151.7 L249 150 Z" fill="#404080"/>
<rect x="320.5" y="139.3" width="13.3" height="14.3" rx="0.8" fill="#38386e"/>
<rect x="322.2" y="140.3" width="10.6" height="11" fill="url(#pBook)"/>
<rect x="322.6" y="151.6" width="10.4" height="1.1" fill="#ffffff"/>
<circle cx="327.9" cy="145.2" r="1.5" fill="none" stroke="#fff" stroke-width="1.1"/>
<path d="M324.4 145.4 L326.4 144.8 V145.8 Z" fill="#fff"/>
<path d="M405.60 141.56 L405.77 139.28 L408.03 139.28 L408.20 141.56 L409.69 142.17 L411.42 140.69 L413.01 142.28 L411.53 144.01 L412.14 145.50 L414.42 145.67 L414.42 147.93 L412.14 148.10 L411.53 149.59 L413.01 151.32 L411.42 152.91 L409.69 151.43 L408.20 152.04 L408.03 154.32 L405.77 154.32 L405.60 152.04 L404.11 151.43 L402.38 152.91 L400.79 151.32 L402.27 149.59 L401.66 148.10 L399.38 147.93 L399.38 145.67 L401.66 145.50 L402.27 144.01 L400.79 142.28 L402.38 140.69 L404.11 142.17 Z" fill="#92c0f4" stroke="#5c68b8" stroke-width="1"/>
<circle cx="406.9" cy="146.8" r="2.6" fill="#e6e6e6" stroke="#5c68b8" stroke-width="1.1"/>
<rect x="460.5" y="143.5" width="5.3" height="5.3" fill="#9cc6f8" stroke="#50509c"/>
<circle cx="472.4" cy="142.4" r="3.1" fill="#9cc6f8" stroke="#50509c"/>
<path d="M469.4 147.3 L473.4 153.3 H465.4 Z" fill="#9cc6f8" stroke="#50509c" stroke-linejoin="round"/>
<path d="M538.4 140 V153.4 H552" fill="none" stroke="#2c2c70" stroke-width="1.3"/>
<path d="M536.6 141.5 L538.4 139 L540.2 141.5 Z M550.5 151.6 L553 153.4 L550.5 155.2 Z" fill="#2c2c70"/>
<path d="M538.6 145.8 L543.3 141.3 L546.5 150.3 L551.4 148.3" fill="none" stroke="#4c4c90" stroke-width="1" stroke-dasharray="1 0.5"/>
<rect x="595.2" y="139.2" width="13.6" height="11.5" rx="1" fill="#4a4a8e"/>
<rect x="597" y="141" width="10" height="8" fill="url(#pScreen)"/>
<rect x="600.6" y="150.5" width="2.8" height="2.6" fill="#6a7ab8"/>
<rect x="598" y="153" width="8" height="1.6" rx="0.8" fill="#2a2a70"/>
<circle cx="649.4" cy="146.4" r="1.6" fill="#3a3a8a"/><circle cx="649.4" cy="146.4" r="0.6" fill="#b8c8f0"/>
<circle cx="654.5" cy="146.4" r="1.6" fill="#3a3a8a"/><circle cx="654.5" cy="146.4" r="0.6" fill="#b8c8f0"/>
<circle cx="659.5" cy="146.4" r="1.6" fill="#3a3a8a"/><circle cx="659.5" cy="146.4" r="0.6" fill="#b8c8f0"/>
<path d="M256 169.5 L261 168.8 L264 171.5 L264 178.5 L260 181 L255 180 L253.2 177.5 L253.2 171.8 Z" fill="#8a1010"/>
<path d="M256.3 170.3 L260.8 169.7 L263.2 172 L263.2 178 L259.8 180.2 L255.4 179.3 L254 177.2 L254 172.3 Z" fill="url(#pCube)"/>
<path d="M254 172.3 L256.5 170.4 L260.8 169.7 L263.2 172 L259.5 174.5 Z" fill="#ffa820"/>
<path d="M259.5 174.5 L263.2 172 V178 L259.8 180.2 Z" fill="#c88a10"/>
<path d="M264 175 L265.5 177.3 L264 178.5 Z" fill="#777"/>
<rect x="253.5" y="264.5" width="11" height="11" fill="#ececec" stroke="#a8a8a8"/>
<path d="M259 266.5 V268.2 M259 271.8 V273.5 M255.5 270 H257.2 M260.8 270 H262.5" stroke="#0a1ab8" stroke-width="1"/>
<path d="M259 264.2 L257.3 266.8 H260.7 Z M259 275.8 L257.3 273.2 H260.7 Z M253.2 270 L255.8 268.3 V271.7 Z M264.8 270 L262.2 268.3 V271.7 Z" fill="#0a1ab8"/>
<rect x="258.1" y="269.1" width="1.8" height="1.8" fill="#0000ff"/>
<rect x="257.3" y="287.3" width="8.5" height="8.5" fill="none" stroke="#2020ff" stroke-width="1" stroke-dasharray="1 1"/>
<path d="M257.5 281.5 V286 M265.5 281.5 V286 M251.5 287.5 H256 M251.5 295.5 H256" stroke="#bbb" stroke-width="0.8"/>
<path d="M259.5 283.5 H264" stroke="#000" stroke-width="1"/><path d="M265 283.5 L262.5 281.8 V285.2 Z" fill="#000"/>
<path d="M253.6 289 V294" stroke="#000" stroke-width="1"/><path d="M253.6 295.5 L251.9 293 H255.3 Z" fill="#000"/>
<text x="254.2" y="310" font-family="Liberation Sans" font-size="9.5" fill="#e80000" font-weight="bold">&amp;</text>
<text x="260.6" y="308.5" font-family="Liberation Sans" font-size="8" fill="#0000e0" font-weight="bold">#</text>
<rect x="252.5" y="309.5" width="12.5" height="5" fill="#fff" stroke="#000"/>
<rect x="254" y="311.3" width="3" height="1.5" fill="#20c020"/><rect x="260" y="311.3" width="3" height="1.5" fill="#000"/>
<rect x="258.5" y="397.5" width="7" height="7" fill="#7fc8f0" stroke="#3a6ab0"/>
<rect x="253.5" y="401" width="6" height="5" fill="#fff" stroke="#888" stroke-width="0.8"/>
<rect x="253" y="407" width="7" height="1.5" fill="#222"/>
<path d="M260.5 402 L263.5 399 M262 399 H263.5 V400.5" stroke="#1a3a9a" stroke-width="0.8" fill="none"/>
<ellipse cx="259.5" cy="421.2" rx="6.3" ry="4" fill="none" stroke="url(#pEye)" stroke-width="1.8"/>
<path d="M253.5 421.5 Q259.5 416.5 265.5 421.5 Q259.5 424.5 253.5 421.5 Z" fill="#f4f4f4" stroke="#111" stroke-width="1"/>
<circle cx="259.6" cy="421.2" r="1.8" fill="#1a4a5a"/>
<path d="M253 438.5 Q253 434 258 433.8 Q264.5 433.5 265 438.5 Q265.3 443 259.5 442.8 Q257.5 446 255.5 446.5 Q256 443.5 256 442 Q252.8 441.5 253 438.5 Z" fill="none" stroke="#1a50f0" stroke-width="1.6"/>
<rect x="263.5" y="445" width="2.5" height="2.5" fill="#1a50f0"/>
<rect x="253" y="455.5" width="12.5" height="7.5" fill="#0c0c80"/>
<text x="253.6" y="462" font-family="Liberation Sans" font-size="7.2" font-weight="bold" fill="#fff">AbI</text>
</svg>
</body></html>
